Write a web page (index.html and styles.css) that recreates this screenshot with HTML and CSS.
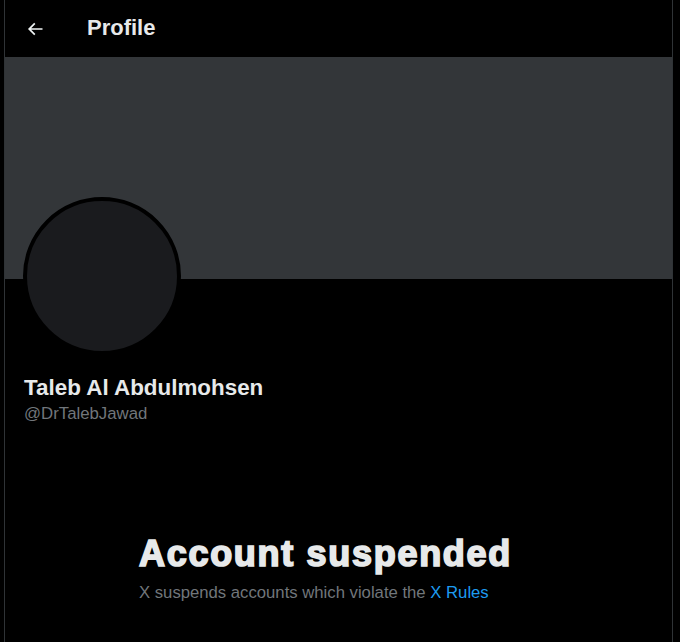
FILE: index.html
```html
<!DOCTYPE html>
<html lang="en">
<head>
  <meta charset="UTF-8" />
  <meta name="viewport" content="width=device-width, initial-scale=1.0" />
  <title>Profile / X</title>
  <link rel="stylesheet" href="styles.css">
</head>
<body>
  <div class="column">
    <header class="topbar">
      <button class="back-btn" aria-label="Back">
        <svg viewBox="0 0 24 24" width="20" height="20"><path d="M7.414 13l5.043 5.04-1.414 1.42L3.586 12l7.457-7.46 1.414 1.42L7.414 11H21v2H7.414z" fill="currentColor"/></svg>
      </button>
      <h2 class="topbar-title">Profile</h2>
    </header>

    <div class="banner"></div>

    <div class="profile">
      <div class="avatar"></div>
      <div class="names">
        <div class="display-name">Taleb Al Abdulmohsen</div>
        <div class="handle">@DrTalebJawad</div>
      </div>
    </div>

    <div class="suspended">
      <h1 class="suspended-title">Account suspended</h1>
      <p class="suspended-text">X suspends accounts which violate the <a href="#">X Rules</a></p>
    </div>
  </div>
</body>
</html>
```

FILE: styles.css
```css
html, body { margin: 0; padding: 0; background: #000; }
body { font-family: "Liberation Sans", Arial, sans-serif; color: #e7e9ea; height: 642px; overflow: hidden; }

.column { width: 667px; margin-left: 4px; min-height: 642px; border-left: 1px solid #2f3336; border-right: 1px solid #2f3336; }

.topbar { height: 57px; display: flex; align-items: center; padding: 0 12px; box-sizing: border-box; }
.back-btn { width: 36px; height: 36px; margin-right: 34px; padding: 0; border: 0; background: transparent; color: #eff3f4; display: flex; align-items: center; justify-content: center; }
.topbar-title { margin: 0 0 2px; font-size: 22px; font-weight: bold; color: #e7e9ea; }

.banner { height: 222px; background: #333639; }

.profile { padding: 0 18px; }
.avatar { width: 150px; height: 150px; border-radius: 50%; background: #1a1b1e; border: 4px solid #000; margin-top: -82px; }
.names { margin-top: 20px; }
.display-name { font-size: 22.4px; font-weight: bold; line-height: 26px; color: #e7e9ea; padding-left: 1px; }
.handle { font-size: 16.8px; line-height: 22px; color: #71767b; padding-left: 1px; margin-top: 2px; }

.suspended { padding: 108px 0 0 134px; }
.suspended-title { margin: 0; font-size: 36px; font-weight: 900; line-height: 42px; color: #e7e9ea; -webkit-text-stroke: 1.7px #e7e9ea; letter-spacing: 1.7px; }
.suspended-text { margin: 7px 0 0; font-size: 16.7px; line-height: 22px; color: #71767b; }
.suspended-text a { color: #1d9bf0; text-decoration: none; }
```
